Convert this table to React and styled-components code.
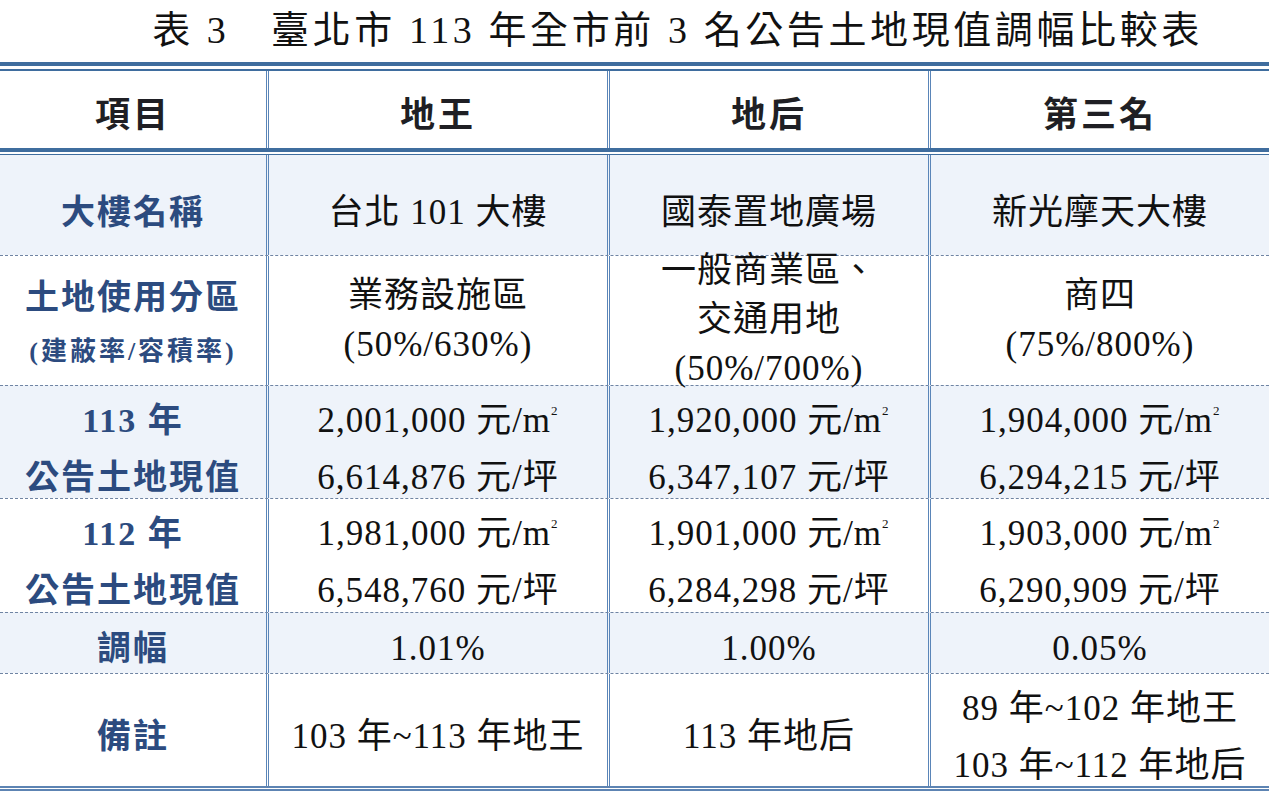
import styled, { createGlobalStyle } from "styled-components";

const GlobalStyle = createGlobalStyle`
   html, body {
      margin: 0;
      padding: 0;
      background: #fff;
   }
`;

const LINE = "#3f6d9e";

// shift > 0 pushes the text down, shift < 0 pulls it up
const rows = [
   {
      h: 100, light: true, lh: 57, shift: 14, labelShift: 14,
      label: [["大樓名稱"]],
      cells: [["台北 101 大樓"], ["國泰置地廣場"], ["新光摩天大樓"]],
   },
   {
      h: 130, light: false, lh: 49, shift: -2, labelShift: 14,
      label: [["土地使用分區"], ["(建蔽率/容積率)", "small"]],
      cells: [
         ["業務設施區", "(50%/630%)"],
         ["一般商業區、", "交通用地", "(50%/700%)"],
         ["商四", "(75%/800%)"],
      ],
   },
   {
      h: 113, light: true, lh: 57, shift: 13, labelShift: 13,
      label: [["113 年"], ["公告土地現值"]],
      cells: [
         ["2,001,000 元/m²", "6,614,876 元/坪"],
         ["1,920,000 元/m²", "6,347,107 元/坪"],
         ["1,904,000 元/m²", "6,294,215 元/坪"],
      ],
   },
   {
      h: 114, light: false, lh: 57, shift: 12, labelShift: 12,
      label: [["112 年"], ["公告土地現值"]],
      cells: [
         ["1,981,000 元/m²", "6,548,760 元/坪"],
         ["1,901,000 元/m²", "6,284,298 元/坪"],
         ["1,903,000 元/m²", "6,290,909 元/坪"],
      ],
   },
   {
      h: 61, light: true, lh: 57, shift: 10, labelShift: 10,
      label: [["調幅"]],
      cells: [["1.01%"], ["1.00%"], ["0.05%"]],
   },
   {
      h: 113, light: false, lh: 57, shift: 13, labelShift: 13,
      label: [["備註"]],
      cells: [
         ["103 年~113 年地王"],
         ["113 年地后"],
         ["89 年~102 年地王", "103 年~112 年地后"],
      ],
   },
];

function Value({ text }) {
   if (text.endsWith("m²")) {
      return (
         <>
            {text.slice(0, -1)}
            <Sup>2</Sup>
         </>
      );
   }
   return text;
}

export default function App() {
   return (
      <Page>
         <GlobalStyle />
         <Title>表 3　臺北市 113 年全市前 3 名公告土地現值調幅比較表</Title>
         <TopRule />
         <Row $h={77}>
            <Cell $first $shift={4}><HeadText>項目</HeadText></Cell>
            <Cell $shift={4}><HeadText>地王</HeadText></Cell>
            <Cell $shift={4}><HeadText>地后</HeadText></Cell>
            <Cell $shift={4}><HeadText>第三名</HeadText></Cell>
         </Row>
         <MidRule />
         {rows.map((r, i) => (
            <Row key={i} $h={r.h} $light={r.light} $dashed={i > 0}>
               <Cell $first $shift={r.labelShift}>
                  {r.label.map(([t, size], j) => (
                     <Label key={j} $small={size === "small"} $lh={r.lh}>{t}</Label>
                  ))}
               </Cell>
               {r.cells.map((lines, k) => (
                  <Cell key={k} $shift={r.shift}>
                     {lines.map((t, j) => (
                        <BodyText key={j} $lh={r.lh}><Value text={t} /></BodyText>
                     ))}
                  </Cell>
               ))}
            </Row>
         ))}
         <BottomRule />
      </Page>
   );
}

const Page = styled.div`
   width: 1269px;
   height: 794px;
   background: #fff;
   font-family: "Liberation Serif", "Noto Sans CJK TC", serif;
   color: #111;
   overflow: hidden;
`;
const Title = styled.h1`
   margin: 0;
   height: 62px;
   padding-left: 86px;
   box-sizing: border-box;
   font-size: 38px;
   font-weight: 400;
   line-height: 60px;
   letter-spacing: 3.6px;
   text-align: center;
   white-space: nowrap;
`;
const TopRule = styled.div`
   height: 3px;
   border-top: 4px solid ${LINE};
   border-bottom: 2px solid ${LINE};
`;
const MidRule = styled.div`
   height: 2px;
   border-top: 4px solid ${LINE};
   border-bottom: 1px solid ${LINE};
`;
const BottomRule = styled.div`
   height: 1px;
   border-top: 2px solid #5d84b3;
   border-bottom: 2px solid #5d84b3;
`;
const Row = styled.div`
   display: grid;
   grid-template-columns: 266px 341px 321px 341px;
   grid-template-rows: minmax(0, 1fr);
   box-sizing: border-box;
   height: ${(p) => p.$h}px;
   background: ${(p) => (p.$light ? "#eef3fa" : "#fff")};
   border-top: ${(p) => (p.$dashed ? "1px dashed #6f84a3" : "none")};
`;
const Cell = styled.div`
   display: flex;
   flex-direction: column;
   align-items: center;
   justify-content: center;
   min-height: 0;
   box-sizing: border-box;
   padding-top: ${(p) => Math.max(p.$shift || 0, 0)}px;
   padding-bottom: ${(p) => Math.max(-(p.$shift || 0), 0)}px;
   border-left: ${(p) => (p.$first ? "none" : "3px double #5a85b8")};
   text-align: center;
   white-space: nowrap;
`;
const HeadText = styled.div`
   font-family: "Noto Sans CJK TC", sans-serif;
   font-size: 35px;
   font-weight: 700;
   letter-spacing: 3px;
   color: #1f1f24;
`;
const Label = styled.div`
   flex-shrink: 0;
   font-family: "Liberation Serif", "Noto Sans CJK TC", serif;
   font-size: ${(p) => (p.$small ? 26 : 34)}px;
   font-weight: 700;
   line-height: ${(p) => (p.$small ? 60 : p.$lh)}px;
   letter-spacing: ${(p) => (p.$small ? 3 : 2)}px;
   color: #2c4b7f;
`;
const BodyText = styled.div`
   flex-shrink: 0;
   font-size: 35px;
   line-height: ${(p) => p.$lh}px;
   letter-spacing: 1px;
`;
const Sup = styled.span`
   font-size: 13px;
   vertical-align: 17px;
   line-height: 0;
`;
